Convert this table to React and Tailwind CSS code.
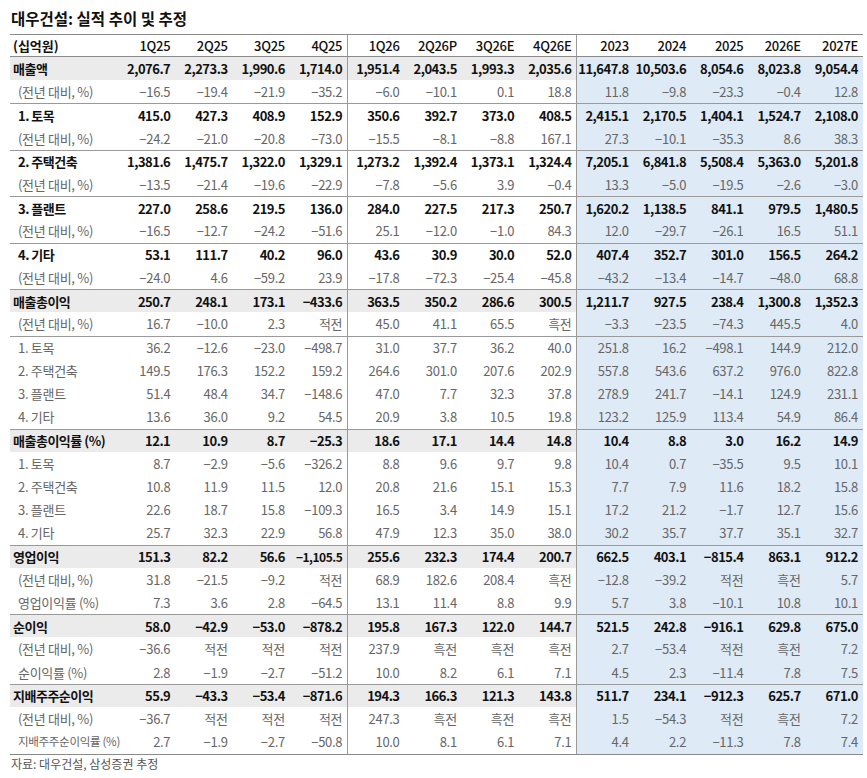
import React from 'react';

const cols = ['1Q25', '2Q25', '3Q25', '4Q25', '1Q26', '2Q26P', '3Q26E', '4Q26E', '2023', '2024', '2025', '2026E', '2027E'];

const yoy = '(전년 대비, %)';

// kind: main = bold + gray band, seg = bold, sub = gray text
const rows = [
    { label: '매출액', kind: 'main', v: '2,076.7 2,273.3 1,990.6 1,714.0 1,951.4 2,043.5 1,993.3 2,035.6 11,647.8 10,503.6 8,054.6 8,023.8 9,054.4' },
    { label: yoy, kind: 'sub', v: '-16.5 -19.4 -21.9 -35.2 -6.0 -10.1 0.1 18.8 11.8 -9.8 -23.3 -0.4 12.8' },
    { label: '1. 토목', kind: 'seg', line: true, v: '415.0 427.3 408.9 152.9 350.6 392.7 373.0 408.5 2,415.1 2,170.5 1,404.1 1,524.7 2,108.0' },
    { label: yoy, kind: 'sub', v: '-24.2 -21.0 -20.8 -73.0 -15.5 -8.1 -8.8 167.1 27.3 -10.1 -35.3 8.6 38.3' },
    { label: '2. 주택건축', kind: 'seg', line: true, v: '1,381.6 1,475.7 1,322.0 1,329.1 1,273.2 1,392.4 1,373.1 1,324.4 7,205.1 6,841.8 5,508.4 5,363.0 5,201.8' },
    { label: yoy, kind: 'sub', v: '-13.5 -21.4 -19.6 -22.9 -7.8 -5.6 3.9 -0.4 13.3 -5.0 -19.5 -2.6 -3.0' },
    { label: '3. 플랜트', kind: 'seg', line: true, v: '227.0 258.6 219.5 136.0 284.0 227.5 217.3 250.7 1,620.2 1,138.5 841.1 979.5 1,480.5' },
    { label: yoy, kind: 'sub', v: '-16.5 -12.7 -24.2 -51.6 25.1 -12.0 -1.0 84.3 12.0 -29.7 -26.1 16.5 51.1' },
    { label: '4. 기타', kind: 'seg', line: true, v: '53.1 111.7 40.2 96.0 43.6 30.9 30.0 52.0 407.4 352.7 301.0 156.5 264.2' },
    { label: yoy, kind: 'sub', v: '-24.0 4.6 -59.2 23.9 -17.8 -72.3 -25.4 -45.8 -43.2 -13.4 -14.7 -48.0 68.8' },
    { label: '매출총이익', kind: 'main', line: true, v: '250.7 248.1 173.1 -433.6 363.5 350.2 286.6 300.5 1,211.7 927.5 238.4 1,300.8 1,352.3' },
    { label: yoy, kind: 'sub', v: '16.7 -10.0 2.3 적전 45.0 41.1 65.5 흑전 -3.3 -23.5 -74.3 445.5 4.0' },
    { label: '1. 토목', kind: 'sub', line: true, v: '36.2 -12.6 -23.0 -498.7 31.0 37.7 36.2 40.0 251.8 16.2 -498.1 144.9 212.0' },
    { label: '2. 주택건축', kind: 'sub', v: '149.5 176.3 152.2 159.2 264.6 301.0 207.6 202.9 557.8 543.6 637.2 976.0 822.8' },
    { label: '3. 플랜트', kind: 'sub', v: '51.4 48.4 34.7 -148.6 47.0 7.7 32.3 37.8 278.9 241.7 -14.1 124.9 231.1' },
    { label: '4. 기타', kind: 'sub', v: '13.6 36.0 9.2 54.5 20.9 3.8 10.5 19.8 123.2 125.9 113.4 54.9 86.4' },
    { label: '매출총이익률 (%)', kind: 'main', line: true, v: '12.1 10.9 8.7 -25.3 18.6 17.1 14.4 14.8 10.4 8.8 3.0 16.2 14.9' },
    { label: '1. 토목', kind: 'sub', v: '8.7 -2.9 -5.6 -326.2 8.8 9.6 9.7 9.8 10.4 0.7 -35.5 9.5 10.1' },
    { label: '2. 주택건축', kind: 'sub', v: '10.8 11.9 11.5 12.0 20.8 21.6 15.1 15.3 7.7 7.9 11.6 18.2 15.8' },
    { label: '3. 플랜트', kind: 'sub', v: '22.6 18.7 15.8 -109.3 16.5 3.4 14.9 15.1 17.2 21.2 -1.7 12.7 15.6' },
    { label: '4. 기타', kind: 'sub', v: '25.7 32.3 22.9 56.8 47.9 12.3 35.0 38.0 30.2 35.7 37.7 35.1 32.7' },
    { label: '영업이익', kind: 'main', line: true, v: '151.3 82.2 56.6 -1,105.5 255.6 232.3 174.4 200.7 662.5 403.1 -815.4 863.1 912.2' },
    { label: yoy, kind: 'sub', v: '31.8 -21.5 -9.2 적전 68.9 182.6 208.4 흑전 -12.8 -39.2 적전 흑전 5.7' },
    { label: '영업이익률 (%)', kind: 'sub', v: '7.3 3.6 2.8 -64.5 13.1 11.4 8.8 9.9 5.7 3.8 -10.1 10.8 10.1' },
    { label: '순이익', kind: 'main', line: true, v: '58.0 -42.9 -53.0 -878.2 195.8 167.3 122.0 144.7 521.5 242.8 -916.1 629.8 675.0' },
    { label: yoy, kind: 'sub', v: '-36.6 적전 적전 적전 237.9 흑전 흑전 흑전 2.7 -53.4 적전 흑전 7.2' },
    { label: '순이익률 (%)', kind: 'sub', v: '2.8 -1.9 -2.7 -51.2 10.0 8.2 6.1 7.1 4.5 2.3 -11.4 7.8 7.5' },
    { label: '지배주주순이익', kind: 'main', line: true, v: '55.9 -43.3 -53.4 -871.6 194.3 166.3 121.3 143.8 511.7 234.1 -912.3 625.7 671.0' },
    { label: yoy, kind: 'sub', v: '-36.7 적전 적전 적전 247.3 흑전 흑전 흑전 1.5 -54.3 적전 흑전 7.2' },
    { label: '지배주주순이익률 (%)', kind: 'sub', small: true, v: '2.7 -1.9 -2.7 -50.8 10.0 8.1 6.1 7.1 4.4 2.2 -11.3 7.8 7.4' },
];

const grid = 'grid grid-cols-[108px_repeat(13,minmax(0,1fr))]';

const cellBorder = (i) => (i === 4 || i === 8 ? 'border-l border-[#9a9a9a]' : '');

const Row = ({ row }) => {
    const { label, kind, line, small } = row;
    const values = row.v.split(' ').map((s) => s.replace(/^-/, '−'));
    const band = kind === 'main' ? 'bg-[#ebebeb]' : '';
    const text = kind === 'sub' ? 'text-[#666] font-normal tracking-[-0.3px]' : 'text-[#111] font-bold tracking-[-0.5px]';
    return (
        <div className={`${grid} h-[23.23px] ${line ? 'border-t border-[#9a9a9a]' : ''}`}>
            <div
                className={`${band} ${text} flex items-center whitespace-nowrap ${kind === 'main' ? 'pl-[3px]' : 'pl-[8px]'} ${small ? 'text-[11.5px]' : 'text-[13px]'}`}
            >
                {label}
            </div>
            {values.map((val, i) => (
                <div
                    key={i}
                    className={`${i >= 8 ? 'bg-[#deeaf6]' : band} ${cellBorder(i)} ${text} flex items-center justify-end pr-[5px] whitespace-nowrap ${
                        val.length > 7 && i < 8 ? 'text-[12px]' : 'text-[13px]'
                    }`}
                >
                    {val}
                </div>
            ))}
        </div>
    );
};

const App = () => {
    return (
        <div className="w-[867px] h-[778px] bg-white font-['Noto_Sans_CJK_KR',sans-serif] text-[#111]">
            <h1 className="pt-[8px] pl-[11px] h-[34px] text-[15.5px] leading-[20px] font-bold">
                대우건설: 실적 추이 및 추정
            </h1>
            <div className="ml-[10px] w-[853px]">
                <div className={`${grid} h-[23px] border-t border-b border-[#8a8a8a] text-[13px] font-medium`}>
                    <div className="flex items-center pl-[3px] font-bold">(십억원)</div>
                    {cols.map((c, i) => (
                        <div key={c} className={`${cellBorder(i)} flex items-center justify-end pr-[5px] tracking-[-0.3px]`}>
                            {c}
                        </div>
                    ))}
                </div>
                {rows.map((row, i) => (
                    <Row key={i} row={row} />
                ))}
                <div className="border-t border-[#8a8a8a]" />
            </div>
            <p className="pl-[11px] text-[12px] leading-[16px] pt-[1px] text-[#555]">자료: 대우건설, 삼성증권 추정</p>
        </div>
    );
};

export default App;
